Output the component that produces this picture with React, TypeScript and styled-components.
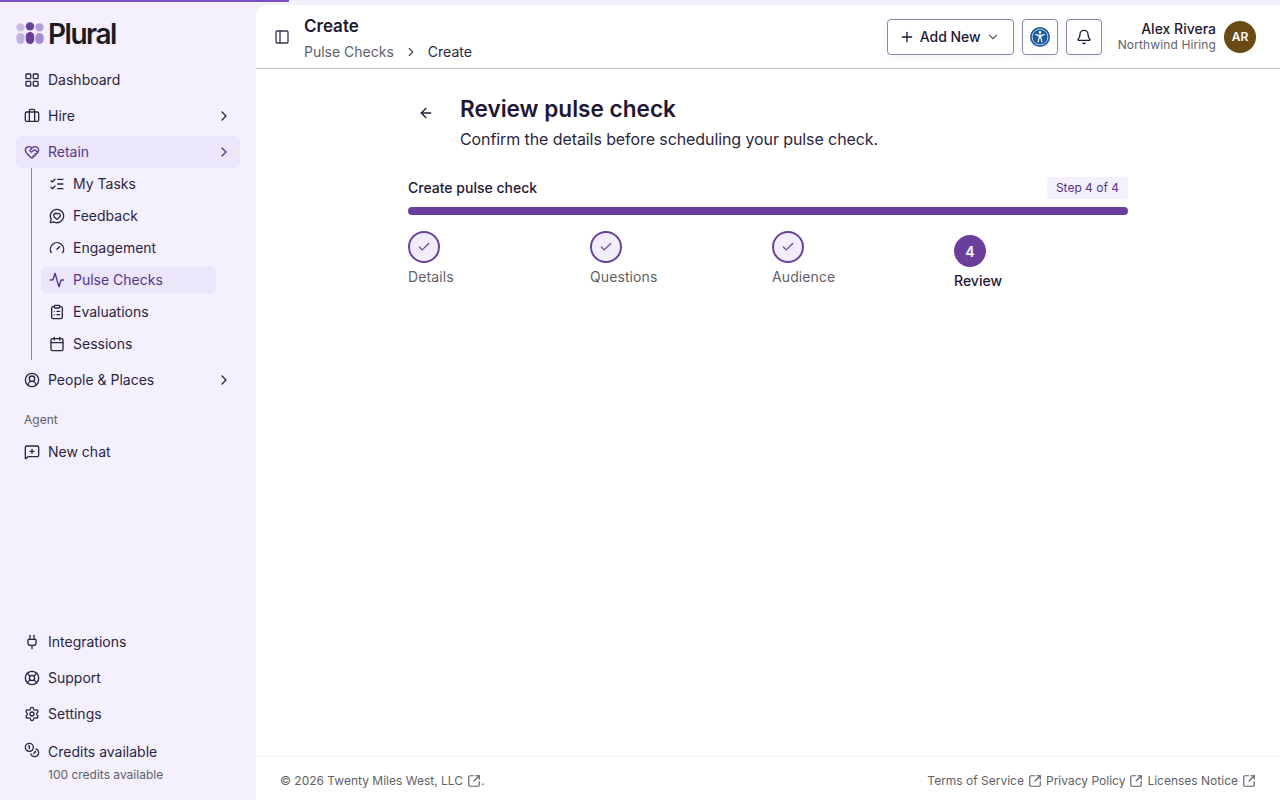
import React from "react";
import styled, { createGlobalStyle } from "styled-components";
import {
  Activity,
  ArrowLeft,
  Bell,
  Briefcase,
  Calendar,
  Check,
  ChevronDown,
  ChevronRight,
  CircleUserRound,
  ClipboardList,
  Coins,
  Gauge,
  HeartHandshake,
  LayoutGrid,
  LifeBuoy,
  ListChecks,
  MessageCircleHeart,
  MessageSquarePlus,
  PanelLeft,
  Plug,
  Plus,
  Settings,
  SquareArrowOutUpRight,
} from "lucide-react";

const colors = {
  shell: "#f4f0fe",
  ink: "#1f1733",
  text: "#2b2640",
  muted: "#5f5f68",
  purple: "#6a3f9c",
  purpleText: "#56358a",
  activeBg: "#ece6fb",
  rail: "#8d86a3",
  line: "#c3bfd0",
  border: "#8b84ad",
};

const GlobalStyle = createGlobalStyle`
  html, body { margin: 0; padding: 0; height: 100%; }
  body {
    background: ${colors.shell};
    font-family: Inter, "Liberation Sans", sans-serif;
    color: ${colors.text};
  }
  * { box-sizing: border-box; }
`;

const Shell = styled.div`
  width: 1280px;
  height: 800px;
  display: flex;
  overflow: hidden;
`;

const LoadBar = styled.div`
  position: absolute;
  top: 0;
  left: 0;
  width: 289px;
  height: 2px;
  background: #7b4fc4;
`;

const Sidebar = styled.aside`
  width: 256px;
  flex: none;
  display: flex;
  flex-direction: column;
  padding: 16px 16px 0;
`;

const Brand = styled.div`
  height: 34px;
  display: flex;
  align-items: center;
  gap: 4px;
  margin-bottom: 14px;
`;

const BrandName = styled.span`
  padding-top: 2px;
  font-size: 28px;
  font-weight: 600;
  letter-spacing: -1.5px;
  line-height: 34px;
  color: #1c1c20;
`;

const NavList = styled.nav`
  display: flex;
  flex-direction: column;
  gap: 4px;
`;

const NavRow = styled.div<{ $active?: boolean }>`
  height: 32px;
  display: flex;
  align-items: center;
  gap: 8px;
  padding: 0 8px;
  border-radius: 6px;
  font-size: 14px;
  color: ${(p) => (p.$active ? colors.purpleText : colors.text)};
  background: ${(p) => (p.$active ? colors.activeBg : "transparent")};
`;

const NavLabel = styled.span`
  flex: 1;
  padding-bottom: 2px;
`;

const SubList = styled.div`
  display: flex;
  flex-direction: column;
  gap: 4px;
  margin-left: 15px;
  padding: 2px 16px 2px 9px;
  border-left: 1px solid ${colors.rail};
  width: 201px;
  margin-top: -4px;
`;

const SubRow = styled.div<{ $active?: boolean }>`
  height: 28px;
  display: flex;
  align-items: center;
  gap: 8px;
  padding: 0 8px;
  border-radius: 6px;
  font-size: 14px;
  color: ${(p) => (p.$active ? colors.purpleText : colors.text)};
  background: ${(p) => (p.$active ? colors.activeBg : "transparent")};
`;

const SectionLabel = styled.div`
  height: 25px;
  display: flex;
  align-items: center;
  padding: 0 8px 1px;
  margin-top: 7px;
  font-size: 12px;
  color: ${colors.muted};
`;

const SideBottom = styled.div`
  margin-top: auto;
  display: flex;
  flex-direction: column;
  gap: 4px;
  padding-bottom: 16px;
`;

const CreditsRow = styled.div`
  display: grid;
  grid-template-columns: 16px 1fr;
  column-gap: 8px;
  padding: 8px 8px 0;
  font-size: 14px;
  line-height: 20px;
`;

const CreditsNote = styled.div`
  grid-column: 2;
  margin-top: 4px;
  font-size: 12px;
  line-height: 18px;
  color: ${colors.muted};
`;

const Panel = styled.main`
  flex: 1;
  min-width: 0;
  margin-top: 5px;
  background: #fff;
  border-top-left-radius: 12px;
  display: flex;
  flex-direction: column;
`;

const TopBar = styled.header`
  height: 64px;
  flex: none;
  display: flex;
  align-items: center;
  padding: 0 24px 0 18px;
  border-bottom: 1px solid ${colors.line};
`;

const IconPlain = styled.span`
  display: flex;
  color: #3b3650;
  margin-right: 14px;
`;

const TitleBlock = styled.div`
  flex: 1;
  display: flex;
  flex-direction: column;
  gap: 5px;
  padding-top: 4px;
`;

const PageTitle = styled.div`
  font-size: 17px;
  line-height: 22px;
  font-weight: 600;
  color: ${colors.ink};
`;

const Crumbs = styled.div`
  display: flex;
  align-items: center;
  gap: 8px;
  font-size: 14px;
  line-height: 20px;
  color: ${colors.muted};
  svg { margin: 0 2px; color: #4a4658; }
`;

const CrumbCurrent = styled.span`
  color: ${colors.text};
`;

const OutlineButton = styled.button<{ $square?: boolean }>`
  height: 36px;
  width: ${(p) => (p.$square ? "36px" : "127px")};
  display: flex;
  align-items: center;
  justify-content: center;
  gap: 5px;
  padding: ${(p) => (p.$square ? "0" : "0 2px 0 0")};
  margin-right: 8px;
  background: #fff;
  border: 1px solid ${colors.border};
  border-radius: 4px;
  font: 500 14px Inter, "Liberation Sans", sans-serif;
  color: ${colors.ink};
  box-shadow: 0 2px 6px rgba(60, 40, 110, 0.07);
`;

const CaretWrap = styled.span`
  display: flex;
  color: #5f5f68;
`;

const UserBlock = styled.div`
  display: flex;
  align-items: center;
  gap: 8px;
  margin-left: 8px;
`;

const UserText = styled.div`
  text-align: right;
  display: flex;
  flex-direction: column;
`;

const UserName = styled.span`
  font-size: 14px;
  line-height: 16px;
  font-weight: 500;
  color: ${colors.ink};
`;

const UserOrg = styled.span`
  font-size: 12px;
  line-height: 16px;
  letter-spacing: 0.12px;
  color: ${colors.muted};
`;

const Avatar = styled.div`
  width: 32px;
  height: 32px;
  border-radius: 50%;
  background: #6b4a14;
  color: #fff;
  font-size: 12px;
  font-weight: 600;
  display: flex;
  align-items: center;
  justify-content: center;
`;

const Content = styled.div`
  flex: 1;
  width: 720px;
  margin: 0 auto;
  padding-top: 26px;
`;

const ReviewHead = styled.div`
  display: flex;
  align-items: flex-start;
  gap: 24px;
  margin-bottom: 26px;
`;

const BackLink = styled.span`
  display: flex;
  width: 28px;
  padding: 10px 0 0 10px;
  color: ${colors.ink};
`;

const Heading = styled.h1`
  margin: 0;
  font-size: 22.6px;
  line-height: 28px;
  font-weight: 600;
  color: ${colors.ink};
`;

const Subheading = styled.p`
  margin: 4px 0 0;
  font-size: 16px;
  line-height: 24px;
  letter-spacing: -0.09px;
  color: ${colors.text};
`;

const StepHeader = styled.div`
  display: flex;
  align-items: center;
  justify-content: space-between;
  height: 22px;
  margin-bottom: 8px;
`;

const StepTitle = styled.span`
  font-size: 14px;
  line-height: 20px;
  font-weight: 500;
  color: ${colors.ink};
`;

const StepBadge = styled.span`
  height: 22px;
  display: flex;
  align-items: center;
  padding: 0 9px 1px;
  border-radius: 4px;
  background: ${colors.shell};
  font-size: 12px;
  color: ${colors.purpleText};
`;

const Track = styled.div`
  height: 8px;
  border-radius: 4px;
  background: ${colors.purple};
  margin-bottom: 16px;
`;

const Steps = styled.div`
  display: grid;
  grid-template-columns: repeat(4, 1fr);
  gap: 8px;
`;

const Step = styled.div<{ $current?: boolean }>`
  display: flex;
  flex-direction: column;
  align-items: flex-start;
  gap: 4px;
  padding-top: ${(p) => (p.$current ? "4px" : "0")};
`;

const StepDot = styled.div<{ $current?: boolean }>`
  width: 32px;
  height: 32px;
  border-radius: 50%;
  display: flex;
  align-items: center;
  justify-content: center;
  border: 2px solid ${colors.purple};
  background: ${(p) => (p.$current ? colors.purple : "#f1edfa")};
  color: ${(p) => (p.$current ? "#fff" : colors.purple)};
  font-size: 14px;
  font-weight: 600;
`;

const StepName = styled.span<{ $current?: boolean }>`
  font-size: 14px;
  line-height: 20px;
  letter-spacing: ${(p) => (p.$current ? "0" : "0.1px")};
  font-weight: ${(p) => (p.$current ? 500 : 400)};
  color: ${(p) => (p.$current ? colors.ink : colors.muted)};
`;

const Footer = styled.footer`
  height: 44px;
  flex: none;
  display: flex;
  align-items: center;
  justify-content: space-between;
  padding: 4px 24px 0;
  border-top: 1px solid #f3f1f9;
  font-size: 12px;
  color: ${colors.muted};
`;

const FootGroup = styled.div<{ $tight?: boolean }>`
  display: flex;
  align-items: center;
  gap: ${(p) => (p.$tight ? "0" : "4px")};
`;

const FootLink = styled.span`
  display: flex;
  align-items: center;
  gap: 4px;
`;

const LogoMark = () => (
  <svg width="28" height="24" viewBox="0 0 28 24">
    <circle cx="4.5" cy="6.4" r="4.2" fill="#c9bbe6" />
    <rect x="0.3" y="12" width="8.4" height="11" rx="4.2" fill="#c2b2e2" />
    <circle cx="14" cy="5.4" r="4.2" fill="#6a3f9c" />
    <rect x="9.8" y="11" width="8.4" height="12" rx="4.2" fill="#6a3f9c" />
    <circle cx="23.5" cy="6.4" r="4.2" fill="#b39fdb" />
    <rect x="19.3" y="12" width="8.4" height="11" rx="4.2" fill="#a68dd2" />
  </svg>
);

const AccessIcon = () => (
  <svg width="20" height="20" viewBox="0 0 20 20">
    <circle cx="10" cy="10" r="10" fill="#1c5a9c" />
    <circle cx="10" cy="10" r="7.9" fill="none" stroke="#fff" strokeWidth="0.7" />
    <circle cx="10" cy="5.4" r="1.3" fill="#fff" />
    <path
      d="M5.6 7.6 L8.7 8.4 H11.3 L14.4 7.6 M9 8.4 V11.4 L8 15 M11 8.4 V11.4 L12 15 M9 9.5 H11 M9 11 H11"
      fill="none"
      stroke="#fff"
      strokeWidth="1.1"
      strokeLinecap="round"
      strokeLinejoin="round"
    />
  </svg>
);

const subItems = [
  { label: "My Tasks", Icon: ListChecks },
  { label: "Feedback", Icon: MessageCircleHeart },
  { label: "Engagement", Icon: Gauge },
  { label: "Pulse Checks", Icon: Activity, active: true },
  { label: "Evaluations", Icon: ClipboardList },
  { label: "Sessions", Icon: Calendar },
];

const bottomItems = [
  { label: "Integrations", Icon: Plug },
  { label: "Support", Icon: LifeBuoy },
  { label: "Settings", Icon: Settings },
];

const steps = ["Details", "Questions", "Audience"];

const App = () => (
  <>
    <GlobalStyle />
    <LoadBar />
    <Shell>
      <Sidebar>
        <Brand>
          <LogoMark />
          <BrandName>Plural</BrandName>
        </Brand>
        <NavList>
          <NavRow>
            <LayoutGrid size={16} />
            <NavLabel>Dashboard</NavLabel>
          </NavRow>
          <NavRow>
            <Briefcase size={16} />
            <NavLabel>Hire</NavLabel>
            <ChevronRight size={16} />
          </NavRow>
          <NavRow $active>
            <HeartHandshake size={16} />
            <NavLabel>Retain</NavLabel>
            <ChevronRight size={16} />
          </NavRow>
          <SubList>
            {subItems.map(({ label, Icon, active }) => (
              <SubRow key={label} $active={active}>
                <Icon size={16} />
                <NavLabel>{label}</NavLabel>
              </SubRow>
            ))}
          </SubList>
          <NavRow>
            <CircleUserRound size={16} />
            <NavLabel>People &amp; Places</NavLabel>
            <ChevronRight size={16} />
          </NavRow>
          <SectionLabel>Agent</SectionLabel>
          <NavRow>
            <MessageSquarePlus size={16} />
            <NavLabel>New chat</NavLabel>
          </NavRow>
        </NavList>
        <SideBottom>
          {bottomItems.map(({ label, Icon }) => (
            <NavRow key={label}>
              <Icon size={16} />
              <NavLabel>{label}</NavLabel>
            </NavRow>
          ))}
          <CreditsRow>
            <Coins size={16} />
            <span>Credits available</span>
            <CreditsNote>100 credits available</CreditsNote>
          </CreditsRow>
        </SideBottom>
      </Sidebar>
      <Panel>
        <TopBar>
          <IconPlain>
            <PanelLeft size={16} />
          </IconPlain>
          <TitleBlock>
            <PageTitle>Create</PageTitle>
            <Crumbs>
              Pulse Checks
              <ChevronRight size={14} />
              <CrumbCurrent>Create</CrumbCurrent>
            </Crumbs>
          </TitleBlock>
          <OutlineButton>
            <Plus size={16} />
            Add New
            <CaretWrap>
              <ChevronDown size={14} />
            </CaretWrap>
          </OutlineButton>
          <OutlineButton $square>
            <AccessIcon />
          </OutlineButton>
          <OutlineButton $square>
            <Bell size={16} />
          </OutlineButton>
          <UserBlock>
            <UserText>
              <UserName>Alex Rivera</UserName>
              <UserOrg>Northwind Hiring</UserOrg>
            </UserText>
            <Avatar>AR</Avatar>
          </UserBlock>
        </TopBar>
        <Content>
          <ReviewHead>
            <BackLink>
              <ArrowLeft size={16} />
            </BackLink>
            <div>
              <Heading>Review pulse check</Heading>
              <Subheading>Confirm the details before scheduling your pulse check.</Subheading>
            </div>
          </ReviewHead>
          <StepHeader>
            <StepTitle>Create pulse check</StepTitle>
            <StepBadge>Step 4 of 4</StepBadge>
          </StepHeader>
          <Track />
          <Steps>
            {steps.map((name) => (
              <Step key={name}>
                <StepDot>
                  <Check size={14} />
                </StepDot>
                <StepName>{name}</StepName>
              </Step>
            ))}
            <Step $current>
              <StepDot $current>4</StepDot>
              <StepName $current>Review</StepName>
            </Step>
          </Steps>
        </Content>
        <Footer>
          <FootGroup $tight>
            <FootLink>
              © 2026 Twenty Miles West, LLC
              <SquareArrowOutUpRight size={14} />
            </FootLink>
            <span>.</span>
          </FootGroup>
          <FootGroup>
            <FootLink>
              Terms of Service
              <SquareArrowOutUpRight size={14} />
            </FootLink>
            <FootLink>
              Privacy Policy
              <SquareArrowOutUpRight size={14} />
            </FootLink>
            <FootLink>
              Licenses Notice
              <SquareArrowOutUpRight size={14} />
            </FootLink>
          </FootGroup>
        </Footer>
      </Panel>
    </Shell>
  </>
);

export default App;
